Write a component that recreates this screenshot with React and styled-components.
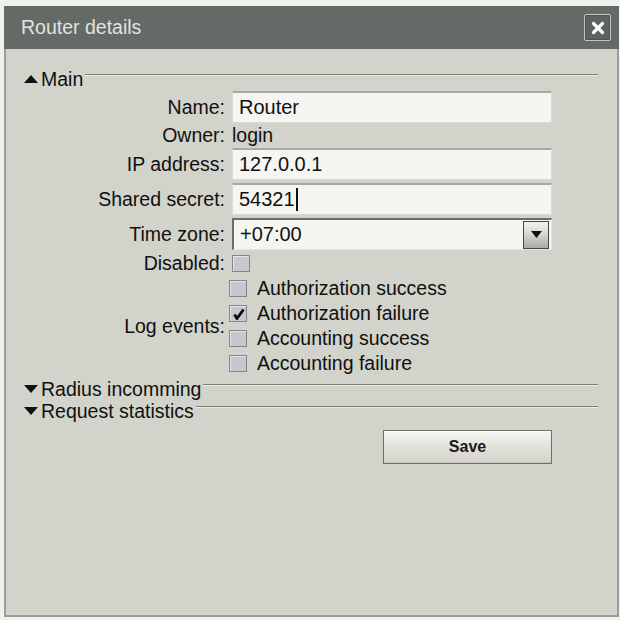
import React from "react";
import styled, { createGlobalStyle } from "styled-components";

const GlobalStyle = createGlobalStyle`
  html, body {
    margin: 0;
    padding: 0;
    background: #f1f1ee;
  }
  body {
    font-family: "Liberation Sans", Arial, sans-serif;
    color: #101010;
  }
`;

const Page = styled.div`
  width: 620px;
  height: 620px;
  box-sizing: border-box;
  padding: 6px 1px 3px 4px;
`;

const Dialog = styled.div`
  width: 615px;
  height: 611px;
  display: flex;
  flex-direction: column;
`;

const TitleBar = styled.header`
  height: 43px;
  flex: none;
  background: #646b67;
  display: flex;
  align-items: center;
  justify-content: space-between;
  padding: 0 8px 0 17px;
`;

const Title = styled.h1`
  margin: 0;
  font-weight: normal;
  font-size: 19.5px;
  color: #e0e3df;
`;

const CloseButton = styled.button`
  width: 27px;
  height: 27px;
  padding: 0;
  border: 1px solid #c3c6c2;
  box-shadow: inset 0 0 0 1px #4d5350;
  border-radius: 2px;
  background: #5d6460;
  display: flex;
  align-items: center;
  justify-content: center;
`;

const Body = styled.div`
  flex: 1;
  background: #d2d3ca;
  border: 2px solid #9b9c97;
  border-top: 0;
  padding: 19px 19px 0 16px;
`;

const SectionHeader = styled.div`
  display: flex;
  align-items: flex-start;
  height: 22px;
  line-height: 22px;
  font-size: 19.5px;
  margin-top: ${(p) => p.$gap || 0}px;
`;

const Arrow = styled.svg`
  flex: none;
  margin: 7px 3px 0 2px;
`;

const Rule = styled.div`
  flex: 1;
  height: 0;
  margin: 6px 0 0 2px;
  border-top: 1px solid #7c7d78;
  border-bottom: 1px solid #eeeee8;
`;

const FormGrid = styled.div`
  display: grid;
  grid-template-columns: 203px 320px;
  column-gap: 7px;
  row-gap: 3px;
  align-items: center;
  margin-top: 1px;
`;

const Label = styled.div`
  text-align: right;
  font-size: 19.5px;
  line-height: 19px;
`;

const TextField = styled.div`
  height: 32px;
  box-sizing: border-box;
  background: #f5f5f2;
  border: 1px solid #dadbd4;
  border-top: 2px solid #a8a9a3;
  padding-left: 6px;
  display: flex;
  align-items: center;
  font-size: 20px;
  color: #111;
`;

const SelectField = styled(TextField)`
  justify-content: space-between;
  padding-right: 2px;
  border-top: 2px solid #6b6c68;
  border-left: 2px solid #6b6c68;
  border-right: 1px solid #e4e4de;
  border-bottom: 1px solid #e4e4de;
`;

const DropButton = styled.span`
  width: 26px;
  height: 28px;
  box-sizing: border-box;
  border: 1px solid #474846;
  background: linear-gradient(#f2f2ee, #d8d8d3 45%, #a9aaa6);
  display: flex;
  align-items: center;
  justify-content: center;
`;

const Caret = styled.span`
  width: 2px;
  height: 23px;
  margin-left: 1px;
  background: #111;
`;

const PlainValue = styled.div`
  height: 19px;
  line-height: 19px;
  font-size: 19.5px;
`;

const CheckCell = styled.div`
  height: 20px;
  display: flex;
  align-items: center;
`;

const Checkbox = styled.span`
  width: 18px;
  height: 17px;
  flex: none;
  box-sizing: border-box;
  border: 1px solid #858589;
  background: #c7c7d0;
  box-shadow: inset 1px 1px 0 #e4e4ea;
  display: inline-flex;
  align-items: center;
  justify-content: center;
`;

const CheckList = styled.div`
  display: flex;
  flex-direction: column;
  margin-left: -3px;
`;

const CheckRow = styled.label`
  display: flex;
  align-items: center;
  gap: 10px;
  height: 25px;
  font-size: 19.5px;
`;

const Footer = styled.div`
  display: flex;
  justify-content: flex-end;
  margin: 8px 46px 0 0;
`;

const SaveButton = styled.button`
  width: 169px;
  height: 34px;
  border: 1px solid #6f706b;
  box-shadow: inset 0 1px 0 #ffffff, inset 0 -1px 0 #c2c2ba;
  background: linear-gradient(#f5f5f1, #e2e2db 50%, #d3d3cb);
  font-family: "Liberation Sans", Arial, sans-serif;
  font-weight: bold;
  font-size: 16px;
  color: #1a1a1a;
`;

const Section = ({ title, open, gap }) => (
  <SectionHeader $gap={gap}>
    <Arrow width="14" height="8" viewBox="0 0 14 8">
      {open ? (
        <polygon points="0,8 7,0 14,8" fill="#111" />
      ) : (
        <polygon points="0,0 14,0 7,8" fill="#111" />
      )}
    </Arrow>
    <span>{title}</span>
    <Rule />
  </SectionHeader>
);

const Tick = () => (
  <svg width="13" height="12" viewBox="0 0 13 12">
    <path d="M2.5 6.5 L5 10.5 L11.5 1.5" fill="none" stroke="#0a0a0a" strokeWidth="2.8" />
  </svg>
);

const logEvents = [
  { text: "Authorization success", checked: false },
  { text: "Authorization failure", checked: true },
  { text: "Accounting success", checked: false },
  { text: "Accounting failure", checked: false },
];

const App = () => {
  return (
    <Page>
      <GlobalStyle />
      <Dialog>
        <TitleBar>
          <Title>Router details</Title>
          <CloseButton aria-label="Close">
            <svg width="14" height="14" viewBox="0 0 14 14">
              <path d="M2.5 2.5 L11.5 11.5 M11.5 2.5 L2.5 11.5" stroke="#fff" strokeWidth="3.2" strokeLinecap="round" />
            </svg>
          </CloseButton>
        </TitleBar>
        <Body>
          <Section title="Main" open />
          <FormGrid>
            <Label>Name:</Label>
            <TextField>Router</TextField>

            <Label>Owner:</Label>
            <PlainValue>login</PlainValue>

            <Label>IP address:</Label>
            <TextField>127.0.0.1</TextField>

            <Label>Shared secret:</Label>
            <TextField>
              54321
              <Caret />
            </TextField>

            <Label>Time zone:</Label>
            <SelectField>
              +07:00
              <DropButton>
                <svg width="11" height="7" viewBox="0 0 11 7">
                  <polygon points="0,0 11,0 5.5,7" fill="#111" />
                </svg>
              </DropButton>
            </SelectField>

            <Label>Disabled:</Label>
            <CheckCell>
              <Checkbox />
            </CheckCell>

            <Label>Log events:</Label>
            <CheckList>
              {logEvents.map((ev) => (
                <CheckRow key={ev.text}>
                  <Checkbox>{ev.checked && <Tick />}</Checkbox>
                  {ev.text}
                </CheckRow>
              ))}
            </CheckList>
          </FormGrid>
          <Section title="Radius incomming" gap={2} />
          <Section title="Request statistics" />
          <Footer>
            <SaveButton>Save</SaveButton>
          </Footer>
        </Body>
      </Dialog>
    </Page>
  );
};

export default App;
